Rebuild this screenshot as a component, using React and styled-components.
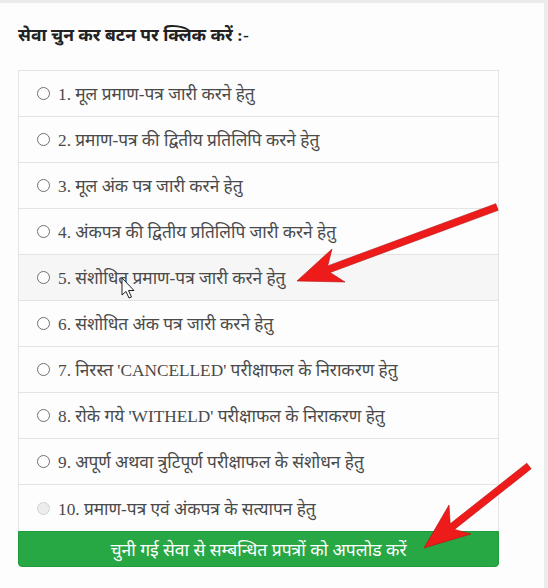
import styled, { createGlobalStyle } from 'styled-components';

const GlobalStyle = createGlobalStyle`
  html, body {
    margin: 0;
    padding: 0;
    background: #ebebeb;
  }
  #root {
    height: 588px;
    overflow: hidden;
  }
`;

const services = [
  '1. मूल प्रमाण-पत्र जारी करने हेतु',
  '2. प्रमाण-पत्र की द्वितीय प्रतिलिपि करने हेतु',
  '3. मूल अंक पत्र जारी करने हेतु',
  '4. अंकपत्र की द्वितीय प्रतिलिपि जारी करने हेतु',
  '5. संशोधित प्रमाण-पत्र जारी करने हेतु',
  '6. संशोधित अंक पत्र जारी करने हेतु',
  "7. निरस्त 'CANCELLED' परीक्षाफल के निराकरण हेतु",
  "8. रोके गये 'WITHELD' परीक्षाफल के निराकरण हेतु",
  '9. अपूर्ण अथवा त्रुटिपूर्ण परीक्षाफल के संशोधन हेतु',
  '10. प्रमाण-पत्र एवं अंकपत्र के सत्यापन हेतु',
];

export default function App() {
  return (
    <>
      <GlobalStyle />
      <Panel>
        <Heading>सेवा चुन कर बटन पर क्लिक करें :-</Heading>
        <ServiceList>
          {services.map((label, i) => (
            <Row key={i} hovered={i === 4}>
              <Radio disabled={i === 9} />
              <Label>{label}</Label>
            </Row>
          ))}
        </ServiceList>
        <UploadButton>चुनी गई सेवा से सम्बन्धित प्रपत्रों को अपलोड करें</UploadButton>

        {/* annotation arrows + mouse pointer drawn over the form */}
        <Overlay width="548" height="588" viewBox="0 0 548 588">
          <polygon
            points="297,281 345,282 330.1,272.5 498.2,210.3 495.8,203.7 327.7,265.9 332,249"
            fill="#ee1b1b"
            stroke="#b31010"
            strokeWidth="0.6"
          />
          <polygon
            points="424,548 471,534 454.5,529.4 531.2,468.8 526.8,463.2 450.2,523.8 449,505"
            fill="#ee1b1b"
            stroke="#b31010"
            strokeWidth="0.6"
          />
          <path
            d="M122 278 L122 295 L126 291.5 L129 298 L131.5 297 L128.5 290.5 L134 290.5 Z"
            fill="#fff"
            stroke="#222"
            strokeWidth="1"
            strokeLinejoin="round"
          />
        </Overlay>
      </Panel>
    </>
  );
}

const Panel = styled.div`
  position: relative;
  width: 544px;
  height: 585px;
  margin-top: 3px;
  background: #fdfdfd;
  padding: 18px 45px 0 18px;
  box-sizing: border-box;
  font-family: "Liberation Serif", "Noto Sans", serif;
`;

const Heading = styled.div`
  font-weight: 700;
  font-size: 17.5px;
  color: #222;
  line-height: 28px;
  margin-bottom: 21px;
`;

const ServiceList = styled.div`
  width: 481px;
  border: 1px solid #e4e4e4;
  border-bottom: none;
  box-sizing: border-box;
`;

const Row = styled.div`
  display: flex;
  align-items: center;
  height: 46px;
  box-sizing: border-box;
  padding-left: 18px;
  gap: 8px;
  border-bottom: 1px solid #e4e4e4;
  background: ${(p) => (p.hovered ? '#f6f6f7' : 'transparent')};
  &:last-child {
    border-bottom: none;
  }
`;

const Radio = styled.span`
  width: 11px;
  height: 11px;
  border-radius: 50%;
  border: 1px solid ${(p) => (p.disabled ? '#d2d2d2' : '#6f6f6f')};
  background: ${(p) => (p.disabled ? '#ececec' : '#fff')};
  flex-shrink: 0;
`;

const Label = styled.span`
  font-size: 17.3px;
  color: #4a4a4a;
  white-space: nowrap;
`;

const UploadButton = styled.div`
  width: 481px;
  height: 36px;
  box-sizing: border-box;
  display: flex;
  align-items: center;
  justify-content: center;
  background: #28a745;
  border: 1px solid #1f9a3b;
  border-radius: 0 0 4px 4px;
  color: #fff;
  font-size: 17.5px;
`;

const Overlay = styled.svg`
  position: absolute;
  left: 0;
  top: -3px;
  pointer-events: none;
`;
